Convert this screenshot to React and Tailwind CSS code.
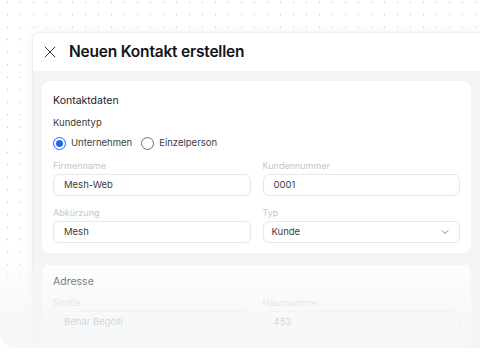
import { X, ChevronDown } from 'lucide-react';

function Field({ label, value, select }) {
  return (
    <div className="flex flex-col">
      <span className="text-[9px] leading-[12px] text-[#c5c7cb]">{label}</span>
      <div className="mt-[2px] h-[22px] rounded-md border border-[#e6e7ea] bg-white flex items-center justify-between pl-[10px] pr-[8px]">
        <span className={`text-[9.5px] text-[#3a3e45] ${select ? '-ml-[2px]' : ''}`}>{value}</span>
        {select && <ChevronDown className="w-[12px] h-[12px] text-[#5a5f68]" strokeWidth={1.5} />}
      </div>
    </div>
  );
}

function Radio({ checked, label }) {
  return (
    <label className="flex items-center gap-[5px]">
      <span className={`w-[13px] h-[13px] rounded-full flex items-center justify-center ${
        checked ? 'border-[1.5px] border-[#2563eb]' : 'border border-[#6b7075]'
      }`}>
        {checked && <span className="w-[7px] h-[7px] rounded-full bg-[#2563eb]" />}
      </span>
      <span className="text-[9.5px] text-[#3a3e45]">{label}</span>
    </label>
  );
}

export default function App() {
  return (
    <div
      className="relative w-[480px] h-[353px] overflow-hidden bg-white bg-[radial-gradient(circle,#b8bcc2_0.7px,transparent_0.9px)] bg-[size:13px_12.5px] bg-[position:1px_-4px]"
      style={{ fontFamily: 'Inter, "Noto Sans", sans-serif' }}
    >
      <div className="pl-[32px] pt-[32px]">
        <div className="rounded-tl-lg border-t border-l border-[#eceef0] shadow-[0_0_12px_rgba(0,0,0,0.05)] overflow-hidden">
          {/* Header */}
          <div className="h-[38px] bg-white flex items-center pl-[7px] gap-[9px]">
            <X className="w-[20px] h-[20px] text-[#3a3f47]" strokeWidth={1.2} />
            <h1 className="text-[15.5px] font-semibold text-[#111318] tracking-[-0.2px]">Neuen Kontakt erstellen</h1>
          </div>

          {/* Body */}
          <div className="bg-[#f3f4f6] pt-[10px] pl-[9px] pr-[9px] pb-[20px]">
            <div className="bg-white rounded-lg pl-[11px] pr-[11px] pt-[12px] pb-[10px]">
              <h2 className="text-[10.5px] leading-[16px] text-[#1d2026]">Kontaktdaten</h2>
              <p className="mt-[7px] text-[9.5px] leading-[14px] text-[#3a3e45]">Kundentyp</p>
              <div className="mt-[6px] flex items-center gap-[9px]">
                <Radio checked label="Unternehmen" />
                <Radio label="Einzelperson" />
              </div>
              <div className="mt-[10px] grid grid-cols-2 gap-x-[12px] gap-y-[11px]">
                <Field label="Firmenname" value="Mesh-Web" />
                <Field label="Kundennummer" value="0001" />
                <Field label="Abkürzung" value="Mesh" />
                <Field label="Typ" value="Kunde" select />
              </div>
            </div>

            <div className="mt-[12px] bg-white rounded-lg pl-[11px] pr-[11px] pt-[9px] pb-[10px]">
              <h2 className="text-[10.5px] leading-[16px] text-[#1d2026]">Adresse</h2>
              <div className="mt-[7px] grid grid-cols-2 gap-x-[12px]">
                <Field label="Straße" value="Behar Begolli" />
                <Field label="Hausnummer" value="453" />
              </div>
            </div>
          </div>
        </div>
      </div>

      {/* bottom fade */}
      <div className="absolute left-0 right-[1px] top-[250px] h-[98px] rounded-b-2xl bg-[linear-gradient(to_bottom,rgba(245,246,247,0)_0%,rgba(245,246,247,0.45)_35%,rgba(245,246,247,0.8)_70%,rgba(245,246,247,0.92)_100%)]" />
      <div className="absolute left-0 right-0 top-[348px] bottom-0 bg-white" />
    </div>
  );
}
